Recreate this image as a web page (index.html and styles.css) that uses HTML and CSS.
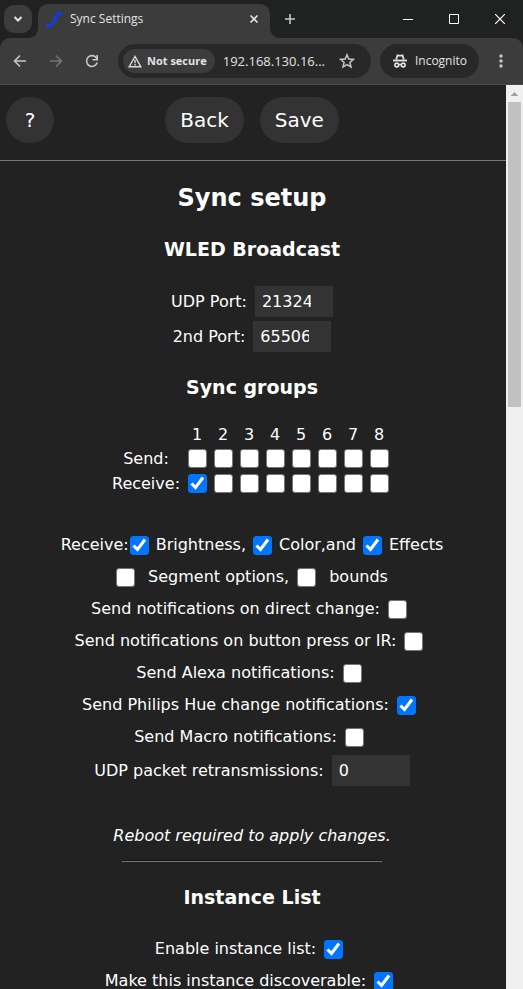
FILE: index.html
```html
<!DOCTYPE html>
<html lang="en">
<head>
<meta charset="utf-8">
<title>Sync Settings</title>
<meta name="viewport" content="width=device-width, initial-scale=1">
<link rel="stylesheet" href="styles.css">
</head>
<body>
<header class="browser">
  <div class="tabstrip">
    <button class="tab-search" aria-label="Search tabs"><svg width="14" height="14" viewBox="0 0 14 14"><path d="M3.500 5l3.500 3.500L10.500 5" fill="none" stroke="#e3e3e3" stroke-width="2"/></svg></button>
    <div class="tab">
      <svg class="favicon" width="16" height="15" viewBox="0 0 16 15" shape-rendering="crispEdges"><path d="M0 12h5v3H0zM5 9h3v4H5zM8 6h1v4H8zM8 3h3v6H8zM11 0h5v3h-5z" fill="#0a3cff"/></svg>
      <span class="tab-title">Sync Settings</span>
      <button class="plain" aria-label="Close tab"><svg width="10" height="10" viewBox="0 0 10 10"><path d="M1.500 1.500l7 7m0-7l-7 7" stroke="#e3e3e3" stroke-width="1.600"/></svg></button>
    </div>
    <button class="plain new-tab" aria-label="New tab"><svg width="12" height="12" viewBox="0 0 12 12"><path d="M6 1v10M1 6h10" stroke="#c7c7c7" stroke-width="1.600"/></svg></button>
    <div class="window-buttons">
      <button class="plain" aria-label="Minimize"><svg width="10" height="10" viewBox="0 0 10 10"><path d="M0 5.500h10" stroke="#fff"/></svg></button>
      <button class="plain" aria-label="Maximize"><svg width="10" height="10" viewBox="0 0 10 10"><path d="M.5.500h9v9h-9z" fill="none" stroke="#fff"/></svg></button>
      <button class="plain" aria-label="Close"><svg width="10" height="10" viewBox="0 0 10 10"><path d="M0 0l10 10m0-10L0 10" stroke="#fff" stroke-width="1.200"/></svg></button>
    </div>
  </div>
  <div class="toolbar">
    <button class="plain nav" aria-label="Back"><svg width="14" height="14" viewBox="0 0 14 14"><path d="M13 7H2M7 1.500L1.500 7 7 12.500" fill="none" stroke="#c7c7c7" stroke-width="1.600"/></svg></button>
    <button class="plain nav" aria-label="Forward"><svg width="14" height="14" viewBox="0 0 14 14"><path d="M1 7h11M7 1.500L12.500 7 7 12.500" fill="none" stroke="#757575" stroke-width="1.600"/></svg></button>
    <button class="plain nav" aria-label="Reload"><svg width="14" height="14" viewBox="0 0 14 14"><path d="M12.200 8.500A5.400 5.400 0 1 1 11.500 4L12.500 5" fill="none" stroke="#c7c7c7" stroke-width="1.600"/><path d="M12.200 1v4.700H7.500" fill="none" stroke="#c7c7c7" stroke-width="1.600"/></svg></button>
    <div class="address">
      <button class="security"><svg width="14" height="13" viewBox="0 0 14 13"><path d="M7 1.500L1.200 11.700h11.600z" fill="none" stroke="#dcdcdc" stroke-width="1.400"/><path d="M7 4.800v3.400M7 9v1.500" stroke="#dcdcdc" stroke-width="1.400"/></svg>Not secure</button>
      <span class="url">192.168.130.16...</span>
      <button class="plain" aria-label="Bookmark"><svg width="16" height="16" viewBox="0 0 16 16"><path d="M8 1.800l1.800 4.200 4.600.4-3.500 3 1.100 4.500L8 11.500l-4 2.400 1.100-4.500-3.500-3 4.600-.4z" fill="none" stroke="#c7c7c7" stroke-width="1.500"/></svg></button>
    </div>
    <button class="incognito"><svg width="14" height="14" viewBox="0 0 14 14"><path d="M3.200 5.500L4.500 1.300q2.500.8 5 0l1.300 4.200" fill="none" stroke="#e3e3e3" stroke-width="1.800"/><path d="M0 6.500h14" stroke="#e3e3e3" stroke-width="1.800"/><circle cx="3.800" cy="11" r="1.900" fill="none" stroke="#e3e3e3" stroke-width="1.600"/><circle cx="10.200" cy="11" r="1.900" fill="none" stroke="#e3e3e3" stroke-width="1.600"/><path d="M5.700 10.500h2.600" stroke="#e3e3e3" stroke-width="1.400"/></svg>Incognito</button>
    <button class="plain menu" aria-label="Menu"><svg width="4" height="14" viewBox="0 0 4 14"><g fill="#c7c7c7"><circle cx="2" cy="2" r="1.700"/><circle cx="2" cy="7" r="1.700"/><circle cx="2" cy="12" r="1.700"/></g></svg></button>
  </div>
</header>
<div class="viewport">
  <main>
    <div class="actions">
      <button class="pill help">?</button>
      <div class="center-actions"><button class="pill">Back</button><button class="pill">Save</button></div>
    </div>
    <form class="settings">
      <h2>Sync setup</h2>
      <h3>WLED Broadcast</h3>
      <div class="ports">
        <label class="field">UDP Port: <input type="number" value="21324"></label>
        <label class="field">2nd Port: <input type="number" value="65506"></label>
      </div>
      <h3>Sync groups</h3>
      <table class="groups">
        <thead><tr><td></td><th>1</th><th>2</th><th>3</th><th>4</th><th>5</th><th>6</th><th>7</th><th>8</th></tr></thead>
        <tbody>
        <tr><td>Send:</td><td><input type="checkbox" aria-label="Send 1"></td><td><input type="checkbox" aria-label="Send 2"></td><td><input type="checkbox" aria-label="Send 3"></td><td><input type="checkbox" aria-label="Send 4"></td><td><input type="checkbox" aria-label="Send 5"></td><td><input type="checkbox" aria-label="Send 6"></td><td><input type="checkbox" aria-label="Send 7"></td><td><input type="checkbox" aria-label="Send 8"></td></tr>
        <tr><td>Receive:</td><td><input type="checkbox" aria-label="Receive 1" checked></td><td><input type="checkbox" aria-label="Receive 2"></td><td><input type="checkbox" aria-label="Receive 3"></td><td><input type="checkbox" aria-label="Receive 4"></td><td><input type="checkbox" aria-label="Receive 5"></td><td><input type="checkbox" aria-label="Receive 6"></td><td><input type="checkbox" aria-label="Receive 7"></td><td><input type="checkbox" aria-label="Receive 8"></td></tr>
        </tbody>
      </table>
      <div class="row tight"><span>Receive:</span><label><input type="checkbox" checked>Brightness,</label><label><input type="checkbox" checked>Color,and</label><label><input type="checkbox" checked>Effects</label></div>
      <div class="row wide"><label><input type="checkbox">Segment options,</label><label><input type="checkbox">bounds</label></div>
      <div class="row single"><label>Send notifications on direct change:<input type="checkbox"></label></div>
      <div class="row single"><label>Send notifications on button press or IR:<input type="checkbox"></label></div>
      <div class="row single"><label>Send Alexa notifications:<input type="checkbox"></label></div>
      <div class="row single"><label>Send Philips Hue change notifications:<input type="checkbox" checked></label></div>
      <div class="row single"><label>Send Macro notifications:<input type="checkbox"></label></div>
      <label class="field retries">UDP packet retransmissions: <input type="number" value="0"></label>
      <p class="note">Reboot required to apply changes.</p>
      <hr>
      <h3>Instance List</h3>
      <div class="row single"><label>Enable instance list:<input type="checkbox" checked></label></div>
      <div class="row single"><label>Make this instance discoverable:<input type="checkbox" checked></label></div>
    </form>
  </main>
  <div class="scrollbar" aria-hidden="true"><svg class="arrow" width="7" height="4" viewBox="0 0 7 4" shape-rendering="crispEdges"><path d="M3 0h1v1h1v1h1v1h1v1H0V3h1V2h1V1h1z" fill="#a3a3a3"/></svg><div class="thumb"></div></div>
</div>
</body>
</html>
```
FILE: styles.css
```css
* { box-sizing: border-box; }

body {
  margin: 0;
  height: 100vh;
  display: flex;
  flex-direction: column;
  overflow: hidden;
  background: #222;
  color: #fff;
  font: 16px/20px "DejaVu Sans", Verdana, sans-serif;
}

button { border: 0; padding: 0; color: inherit; font: inherit; }
svg { display: block; flex: none; }
.plain { background: none; }

/* Browser frame */
.browser {
  flex: none;
  background: #202221;
  color: #e3e3e3;
  font: 12px/16px "Open Sans", "Segoe UI", sans-serif;
}
.tabstrip { display: flex; align-items: center; height: 38px; padding: 0 18px 0 4px; }
.tab-search {
  display: grid;
  place-items: center;
  width: 28px;
  height: 28px;
  margin-right: 6px;
  border-radius: 10px;
  background: #3c3c3c;
}
.tab {
  position: relative;
  align-self: flex-end;
  display: flex;
  align-items: center;
  width: 232px;
  height: 34px;
  padding: 0 11px 4px 8px;
  gap: 8px;
  border-radius: 10px 10px 0 0;
  background: #3c3c3c;
}
.tab::before,
.tab::after {
  content: "";
  position: absolute;
  bottom: 0;
  width: 10px;
  height: 10px;
}
.tab::before { right: 100%; background: radial-gradient(circle at 0 0, transparent 10px, #3c3c3c 10px); }
.tab::after { left: 100%; background: radial-gradient(circle at 100% 0, transparent 10px, #3c3c3c 10px); }
.tab-title { flex: 1; }
.new-tab { margin-left: 14px; }
.window-buttons { display: flex; gap: 36px; margin-left: auto; }
.toolbar {
  display: flex;
  align-items: center;
  height: 47px;
  padding: 0 20px 0 13px;
  border-radius: 10px 10px 0 0;
  border-bottom: 1px solid #484848;
  background: #3c3c3c;
}
.nav { margin-right: 22px; }
.address {
  flex: 1;
  display: flex;
  align-items: center;
  height: 34px;
  margin-left: -3px;
  padding: 0 16px 0 5px;
  border-radius: 17px;
  background: #282828;
}
.security {
  display: flex;
  align-items: center;
  gap: 5px;
  height: 24px;
  padding: 0 8px 0 5px;
  border-radius: 12px;
  background: #3c3c3c;
  font-size: 11px;
  font-weight: 700;
  white-space: nowrap;
}
.url { flex: 1; margin-left: 8px; font-size: 13px; }
.incognito {
  display: flex;
  align-items: center;
  gap: 8px;
  height: 34px;
  margin-left: 9px;
  padding: 0 12px 0 13px;
  border-radius: 17px;
  background: #282828;
}
.menu { margin-left: 20px; }

/* Page */
.viewport { flex: 1; min-height: 0; display: flex; }
main { flex: 1; overflow: hidden; }
.actions {
  display: grid;
  grid-template-columns: 1fr auto 1fr;
  height: 76px;
  padding: 12px 8px 0 6px;
  border-bottom: 1px solid #777;
}
.center-actions { display: flex; gap: 16px; }
.pill {
  height: 46px;
  padding: 0 15px;
  border-radius: 23px;
  background: #333;
  font-size: 20px;
}
.help { width: 48px; }
.settings {
  display: flex;
  flex-direction: column;
  align-items: center;
  padding: 21px 8px 0 6px;
}
h2 { margin: 0; font-size: 24px; line-height: 32px; }
h3 { margin: 23px 0 24px; font-size: 19px; line-height: 24px; }
.ports { display: grid; gap: 4px; justify-items: center; padding-top: 1px; }
.field { display: flex; align-items: center; gap: 8px; }
input[type="number"] {
  width: 78px;
  height: 31px;
  padding: 0 22px 0 7px;
  border: 0;
  background: #333;
  color: #fff;
  font: inherit;
  appearance: textfield;
}
input[type="number"]::-webkit-inner-spin-button { display: none; }
input[type="checkbox"] {
  appearance: none;
  flex: none;
  display: block;
  width: 19px;
  height: 19px;
  margin: 0;
  border: 1px solid #767676;
  border-radius: 3px;
  background: #fff;
}
input[type="checkbox"]:checked {
  border-color: #0075ff;
  background: #0075ff url("data:image/svg+xml,%3Csvg xmlns='http://www.w3.org/2000/svg' viewBox='0 0 17 17'%3E%3Cpath d='M2.500 8.500l4 4 7.500-10' fill='none' stroke='white' stroke-width='3'/%3E%3C/svg%3E");
}
.groups { border-spacing: 0; text-align: center; }
.groups th, .groups td { height: 25px; padding: 0; min-width: 26px; font-weight: 400; }
.groups thead th, .groups thead td { height: 23px; }
.groups td:first-child { padding-right: 4px; }
.groups input[type="checkbox"] { margin: 0 auto; }
.row { display: flex; align-items: center; justify-content: center; gap: 8px; height: 32px; }
.row label { display: flex; align-items: center; gap: 8px; }
.row.tight { gap: 1px; margin-top: 33px; }
.row.tight label { gap: 7px; }
.row.tight label + label { margin-left: 6px; }
.row.wide label { gap: 13px; }
.row.single { padding-right: 6px; }
.retries { margin-top: 2px; }
.note { margin: 40px 0 14px; font-style: italic; }
hr { width: 53%; margin: 0; border: 0; border-top: 1px solid #111; border-bottom: 1px solid #777; }

/* Page scrollbar */
.scrollbar {
  flex: none;
  width: 17px;
  padding: 7px 2px 0;
  background: #f0f0f0;
}
.arrow { margin: 0 auto 6px; }
.thumb { height: 34%; background: #c1c1c1; }
```
